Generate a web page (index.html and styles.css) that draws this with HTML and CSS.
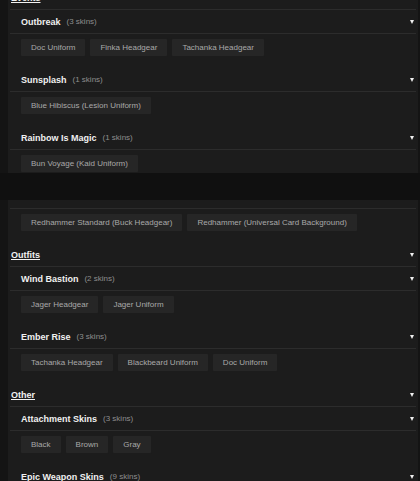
FILE: index.html
```html
<!DOCTYPE html>
<html>
<head>
<meta charset="utf-8">
<link rel="stylesheet" href="styles.css">
</head>
<body>
<div class="panel">
  <section class="cat">
    <div class="cat-head"><span class="cat-title">Events</span><i class="arrow"></i></div>
    <div class="sub">
      <div class="sub-head"><span class="sub-title">Outbreak</span><span class="count">(3 skins)</span><i class="arrow"></i></div>
      <div class="chips"><span class="chip">Doc Uniform</span><span class="chip">Finka Headgear</span><span class="chip">Tachanka Headgear</span></div>
    </div>
    <div class="sub">
      <div class="sub-head"><span class="sub-title">Sunsplash</span><span class="count">(1 skins)</span><i class="arrow"></i></div>
      <div class="chips"><span class="chip">Blue Hibiscus (Lesion Uniform)</span></div>
    </div>
    <div class="sub">
      <div class="sub-head"><span class="sub-title">Rainbow Is Magic</span><span class="count">(1 skins)</span><i class="arrow"></i></div>
      <div class="chips cut"><span class="chip">Bun Voyage (Kaid Uniform)</span></div>
    </div>
    <div class="band"></div>
    <div class="sub">
      <div class="sub-head stub"></div>
      <div class="chips"><span class="chip">Redhammer Standard (Buck Headgear)</span><span class="chip">Redhammer (Universal Card Background)</span></div>
    </div>
  </section>
  <section class="cat">
    <div class="cat-head"><span class="cat-title">Outfits</span><i class="arrow"></i></div>
    <div class="sub">
      <div class="sub-head"><span class="sub-title">Wind Bastion</span><span class="count">(2 skins)</span><i class="arrow"></i></div>
      <div class="chips"><span class="chip">Jager Headgear</span><span class="chip">Jager Uniform</span></div>
    </div>
    <div class="sub">
      <div class="sub-head"><span class="sub-title">Ember Rise</span><span class="count">(3 skins)</span><i class="arrow"></i></div>
      <div class="chips"><span class="chip">Tachanka Headgear</span><span class="chip">Blackbeard Uniform</span><span class="chip">Doc Uniform</span></div>
    </div>
  </section>
  <section class="cat">
    <div class="cat-head"><span class="cat-title">Other</span><i class="arrow"></i></div>
    <div class="sub">
      <div class="sub-head"><span class="sub-title">Attachment Skins</span><span class="count">(3 skins)</span><i class="arrow"></i></div>
      <div class="chips"><span class="chip">Black</span><span class="chip">Brown</span><span class="chip">Gray</span></div>
    </div>
    <div class="sub">
      <div class="sub-head"><span class="sub-title">Epic Weapon Skins</span><span class="count">(9 skins)</span><i class="arrow"></i></div>
    </div>
  </section>
</div>
</body>
</html>
```

FILE: styles.css
```css
html, body {
  margin: 0;
  padding: 0;
  background: #141414;
  font-family: "Liberation Sans", Arial, sans-serif;
}

.panel {
  margin: -14px 2px 0 8px;
  padding: 0 2px 0 2px;
  background: #1c1c1c;
  min-height: 520px;
}

.cat-head,
.sub-head {
  display: flex;
  align-items: center;
  height: 23px;
  border-bottom: 1px solid #2c2c2c;
  padding-right: 2px;
}

.cat-head {
  padding-left: 1px;
}

.sub-head {
  padding-left: 11px;
}

.cat-title {
  color: #f2f2f2;
  font-size: 9px;
  font-weight: bold;
  text-decoration: underline;
}

.sub-title {
  color: #f0f0f0;
  font-size: 9px;
  font-weight: bold;
}

.count {
  color: #8e8e8e;
  font-size: 8px;
  margin-left: 6px;
}

.arrow {
  margin-left: auto;
  width: 0;
  height: 0;
  border-left: 2.5px solid transparent;
  border-right: 2.5px solid transparent;
  border-top: 4px solid #f0f0f0;
}

.chips {
  display: flex;
  gap: 5px;
  padding: 5px 11px 12px;
}

.chips.cut {
  padding-bottom: 1px;
}

.chip {
  display: inline-block;
  height: 17px;
  line-height: 17px;
  padding: 0 10px;
  background: #262626;
  color: #a9a9a9;
  font-size: 8px;
  border-radius: 1px;
  box-shadow: 0 0 1px #222;
}

.band {
  height: 27px;
  margin: 0 -4px 0 -10px;
  background: #101010;
}

.sub-head.stub {
  height: 8px;
}
```
